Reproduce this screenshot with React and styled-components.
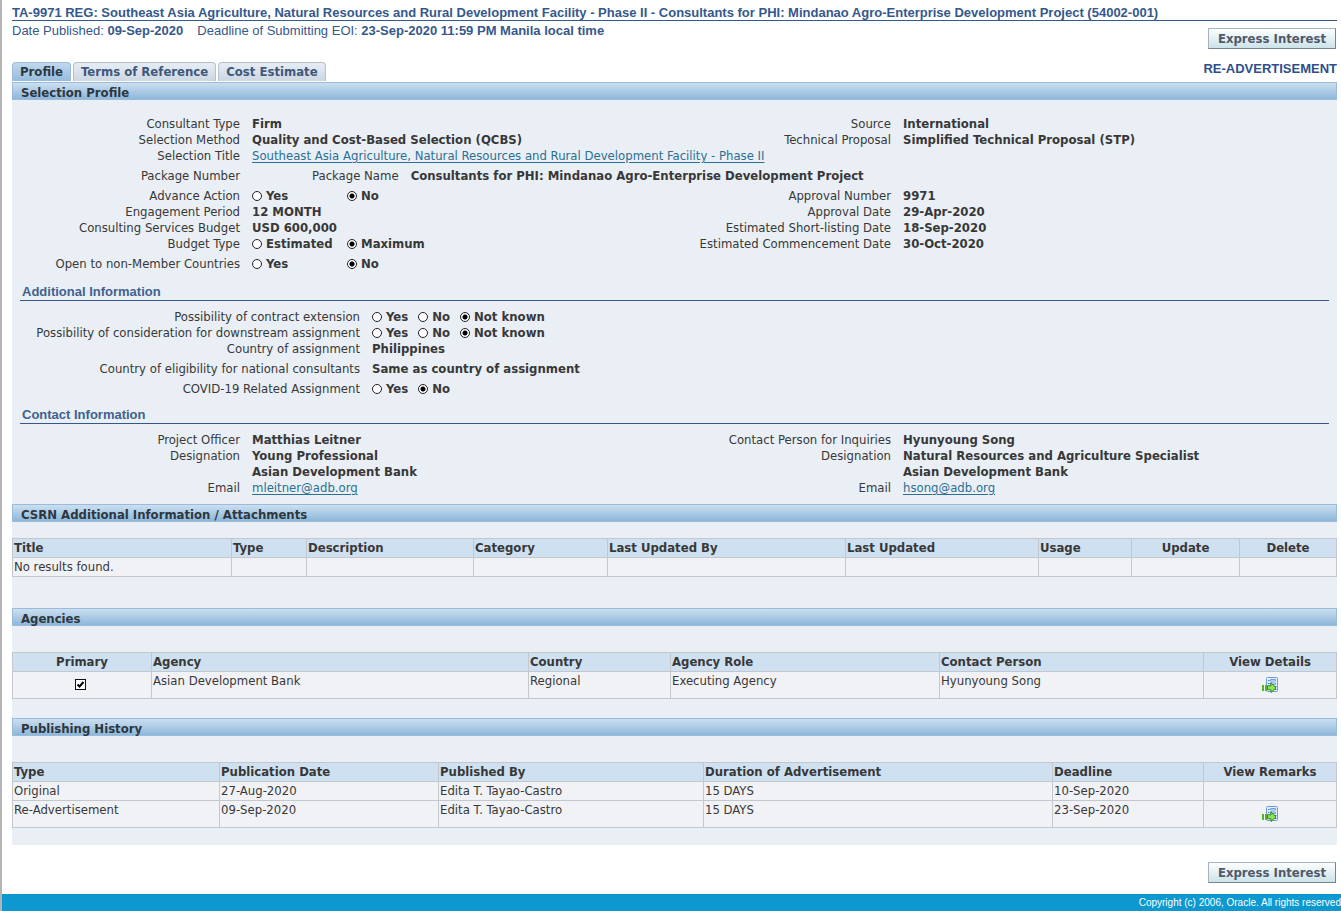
import React, { useState } from 'react'
import styled, { createGlobalStyle, css } from 'styled-components'

const GlobalStyle = createGlobalStyle`
  * {
    box-sizing: border-box;
  }

  body {
    margin: 0;
    background: #fff;
    color: #383838;
    font: 13px/16px "DejaVu Sans Condensed", Tahoma, sans-serif;
  }
`

const attachmentColumns = [
  { title: 'Title', width: 219 },
  { title: 'Type', width: 75 },
  { title: 'Description', width: 167 },
  { title: 'Category', width: 134 },
  { title: 'Last Updated By', width: 238 },
  { title: 'Last Updated', width: 193 },
  { title: 'Usage', width: 93 },
  { title: 'Update', width: 108, center: true },
  { title: 'Delete', width: 97, center: true },
]

const agencyColumns = [
  { title: 'Primary', width: 139, center: true },
  { title: 'Agency', width: 377 },
  { title: 'Country', width: 142 },
  { title: 'Agency Role', width: 269 },
  { title: 'Contact Person', width: 264 },
  { title: 'View Details', width: 133, center: true },
]

const historyColumns = [
  { title: 'Type', width: 207 },
  { title: 'Publication Date', width: 219 },
  { title: 'Published By', width: 265 },
  { title: 'Duration of Advertisement', width: 349 },
  { title: 'Deadline', width: 151 },
  { title: 'View Remarks', width: 133, center: true },
]

const DetailsIcon = () => (
  <svg width="16" height="16" viewBox="0 0 16 16" aria-hidden="true">
    <rect x="4.5" y="0.5" width="11" height="14" rx="1" fill="#e3effd" stroke="#6c9be0" />
    <path d="M6 3.5h1.5M6 6.5h1.5M13 9.5h1.5M13 12.5h1.5" stroke="#3f77cc" />
    <path d="M8.5 2.5h5v1.500h-5zM8.500 6h5v1.500h-5z" fill="#fff" stroke="#6f9fe2" />
    <path d="M0 8h2v6h-2zM3 8h2v6h-2z" fill="#57b32e" />
    <path d="M5.500 8.700h3.500v-3l5 5.300-5 4.500v-2.700h-3.500z" fill="#8fe35a" stroke="#2c8a18" />
  </svg>
)

const RadioField = ({ label, options, value, wide, gap }) => {
  const [selected, setSelected] = useState(value)
  return (
    <Field $gap={gap}>
      <Label>{label}</Label>
      <Options role="radiogroup" aria-label={label} $wide={wide}>
        {options.map((option) => (
          <Option key={option}>
            <Radio
              name={label}
              checked={selected === option}
              onChange={() => setSelected(option)}
            />
            {option}
          </Option>
        ))}
      </Options>
    </Field>
  )
}

const TextField = ({ label, children, gap }) => (
  <Field $gap={gap}>
    <Label>{label}</Label>
    <Value>{children}</Value>
  </Field>
)

const DataTable = ({ columns, rows }) => (
  <Table>
    <colgroup>
      {columns.map((col) => <col key={col.title} style={{ width: col.width }} />)}
    </colgroup>
    <thead>
      <tr>
        {columns.map((col) => (
          <HeadCell key={col.title} scope="col" $center={col.center}>{col.title}</HeadCell>
        ))}
      </tr>
    </thead>
    <tbody>
      {rows.map((row, i) => (
        <tr key={i}>
          {columns.map((col, j) => (
            <Cell key={col.title} $center={col.center}>{row[j]}</Cell>
          ))}
        </tr>
      ))}
    </tbody>
  </Table>
)

const App = () => {
  const [primary, setPrimary] = useState(true)

  return (
    <Page>
      <GlobalStyle />
      <Main>
        <Title>
          TA-9971 REG: Southeast Asia Agriculture, Natural Resources and Rural Development Facility - Phase II - Consultants for PHI: Mindanao Agro-Enterprise Development Project (54002-001)
        </Title>
        <Header>
          <HeaderSide>
            <Meta>
              <span>Date Published: <b>09-Sep-2020</b></span>
              <span>Deadline of Submitting EOI: <b>23-Sep-2020 11:59 PM Manila local time</b></span>
            </Meta>
            <Tabs>
              <Tab href="#profile" $active>Profile</Tab>
              <Tab href="#terms">Terms of Reference</Tab>
              <Tab href="#cost">Cost Estimate</Tab>
            </Tabs>
          </HeaderSide>
          <HeaderActions>
            <Button>Express Interest</Button>
            <Notice>RE-ADVERTISEMENT</Notice>
          </HeaderActions>
        </Header>

        <Panel>
          <SectionBar>Selection Profile</SectionBar>
          <ProfileColumns>
            <div>
              <TextField label="Consultant Type">Firm</TextField>
              <TextField label="Selection Method">Quality and Cost-Based Selection (QCBS)</TextField>
              <TextField label="Selection Title">
                <Link href="#facility">Southeast Asia Agriculture, Natural Resources and Rural Development Facility - Phase II</Link>
              </TextField>
              <Field $gap>
                <Label>Package Number</Label>
                <PackageName>
                  <span>Package Name</span>
                  <Value>Consultants for PHI: Mindanao Agro-Enterprise Development Project</Value>
                </PackageName>
              </Field>
              <RadioField label="Advance Action" options={['Yes', 'No']} value="No" wide gap />
              <TextField label="Engagement Period">12 MONTH</TextField>
              <TextField label="Consulting Services Budget">USD 600,000</TextField>
              <RadioField label="Budget Type" options={['Estimated', 'Maximum']} value="Maximum" wide />
              <RadioField label="Open to non-Member Countries" options={['Yes', 'No']} value="No" wide gap />
            </div>
            <SideFields>
              <div>
                <TextField label="Source">International</TextField>
                <TextField label="Technical Proposal">Simplified Technical Proposal (STP)</TextField>
              </div>
              <div>
                <TextField label="Approval Number">9971</TextField>
                <TextField label="Approval Date">29-Apr-2020</TextField>
                <TextField label="Estimated Short-listing Date">18-Sep-2020</TextField>
                <TextField label="Estimated Commencement Date">30-Oct-2020</TextField>
              </div>
            </SideFields>
          </ProfileColumns>

          <SubTitle>Additional Information</SubTitle>
          <WideFields>
            <RadioField label="Possibility of contract extension" options={['Yes', 'No', 'Not known']} value="Not known" />
            <RadioField label="Possibility of consideration for downstream assignment" options={['Yes', 'No', 'Not known']} value="Not known" />
            <TextField label="Country of assignment">Philippines</TextField>
            <TextField label="Country of eligibility for national consultants" gap>Same as country of assignment</TextField>
            <RadioField label="COVID-19 Related Assignment" options={['Yes', 'No']} value="No" gap />
          </WideFields>

          <SubTitle>Contact Information</SubTitle>
          <ContactColumns>
            <div>
              <TextField label="Project Officer">Matthias Leitner</TextField>
              <TextField label="Designation">Young Professional<br />Asian Development Bank</TextField>
              <TextField label="Email"><Link href="mailto:mleitner@adb.org">mleitner@adb.org</Link></TextField>
            </div>
            <div>
              <TextField label="Contact Person for Inquiries">Hyunyoung Song</TextField>
              <TextField label="Designation">Natural Resources and Agriculture Specialist<br />Asian Development Bank</TextField>
              <TextField label="Email"><Link href="mailto:hsong@adb.org">hsong@adb.org</Link></TextField>
            </div>
          </ContactColumns>

          <SectionBar>CSRN Additional Information / Attachments</SectionBar>
          <AttachmentsBody>
            <DataTable columns={attachmentColumns} rows={[['No results found.']]} />
          </AttachmentsBody>

          <SectionBar>Agencies</SectionBar>
          <TableBody>
            <DataTable
              columns={agencyColumns}
              rows={[[
                <Checkbox
                  aria-label="Primary"
                  checked={primary}
                  onChange={() => setPrimary(!primary)}
                />,
                'Asian Development Bank',
                'Regional',
                'Executing Agency',
                'Hyunyoung Song',
                <IconButton aria-label="View Details"><DetailsIcon /></IconButton>,
              ]]}
            />
          </TableBody>

          <SectionBar>Publishing History</SectionBar>
          <TableBody>
            <DataTable
              columns={historyColumns}
              rows={[
                ['Original', '27-Aug-2020', 'Edita T. Tayao-Castro', '15 DAYS', '10-Sep-2020'],
                [
                  'Re-Advertisement', '09-Sep-2020', 'Edita T. Tayao-Castro', '15 DAYS', '23-Sep-2020',
                  <IconButton aria-label="View Remarks"><DetailsIcon /></IconButton>,
                ],
              ]}
            />
          </TableBody>
        </Panel>

        <BottomActions>
          <Button>Express Interest</Button>
        </BottomActions>
      </Main>
      <Footer>Copyright (c) 2006, Oracle. All rights reserved</Footer>
    </Page>
  )
}

const arial = css`
  font-family: "Liberation Sans", Arial, sans-serif;
`

const Page = styled.div`
  min-height: 100vh;
  display: flex;
  flex-direction: column;
  border-left: 2px solid #b4b4b4;
`

const Main = styled.main`
  flex: 1;
  padding: 5px 4px 0 10px;
`

const Title = styled.h1`
  ${arial}
  margin: 0;
  font-size: 13px;
  line-height: 15px;
  color: #35588c;
  border-bottom: 1px solid #35588c;
`

const Header = styled.header`
  display: flex;
  justify-content: space-between;
  margin-bottom: 1px;
`

const HeaderSide = styled.div`
  display: flex;
  flex-direction: column;
  justify-content: space-between;
`

const HeaderActions = styled.div`
  display: flex;
  flex-direction: column;
  align-items: flex-end;
  gap: 12px;
  padding: 7px 0 4px;
`

const Meta = styled.div`
  ${arial}
  display: flex;
  gap: 14px;
  padding-top: 2px;
  color: #35588c;
`

const Tabs = styled.nav`
  display: flex;
  gap: 2px;
`

const Tab = styled.a`
  height: 19px;
  padding: 1px 7px 0;
  border: 1px solid #b9c0c8;
  border-bottom: 0;
  border-radius: 4px 4px 0 0;
  background: linear-gradient(#e6edf4, #cdd7e2);
  color: #3f587c;
  font-weight: bold;
  line-height: 15px;
  text-decoration: none;

  ${props => props.$active && css`
    border-color: #9dbedb;
    background: linear-gradient(#c0d8ec, #96bbdc);
    color: #2c3945;
  `}
`

const Notice = styled.strong`
  ${arial}
  color: #2f4f8c;
`

const Button = styled.button`
  height: 21px;
  margin-right: 1px;
  padding: 0 9px;
  border: 1px solid;
  border-color: #a3b3c0 #77838f #77838f #a3b3c0;
  background: linear-gradient(#fdfefe, #cbe3e9);
  color: #50596a;
  font: bold 13px/16px "DejaVu Sans Condensed", Tahoma, sans-serif;
  cursor: pointer;
`

const Panel = styled.div`
  background: #e9eff5;
`

const SectionBar = styled.h2`
  margin: 0;
  height: 18px;
  padding: 2px 8px 0;
  border: 1px solid #9abbdb;
  background: linear-gradient(#cbdff0, #8db7da);
  color: #2e3740;
  font-size: 13px;
  line-height: 16px;
`

const SubTitle = styled.h3`
  ${arial}
  margin: 0 8px;
  padding: 0 2px;
  border-bottom: 1px solid #35588c;
  color: #42618f;
  font-size: 13px;
  line-height: 16px;
`

const Field = styled.div`
  display: grid;
  grid-template-columns: 228px 1fr;
  column-gap: 12px;
  margin-top: ${props => (props.$gap ? '4px' : '0')};
  white-space: nowrap;
`

const Columns = styled.div`
  display: grid;
  grid-template-columns: minmax(0, 651fr) minmax(0, 674fr);
`

const ProfileColumns = styled(Columns)`
  padding: 16px 0 12px;
`

const ContactColumns = styled(Columns)`
  padding: 8px 0;
`

const SideFields = styled.div`
  display: flex;
  flex-direction: column;
  gap: 40px;
`

const WideFields = styled.div`
  padding: 8px 0 10px;

  ${Field} {
    grid-template-columns: 348px 1fr;
  }
`

const Label = styled.span`
  text-align: right;
`

const Value = styled.span`
  font-weight: bold;
`

const PackageName = styled.div`
  display: flex;
  gap: 12px;
  padding-left: 60px;
`

const Options = styled.div`
  display: flex;
  gap: ${props => (props.$wide ? '0' : '10px')};
  font-weight: bold;

  > label {
    min-width: ${props => (props.$wide ? '95px' : '0')};
  }
`

const Option = styled.label`
  display: flex;
  align-items: center;
  gap: 4px;
`

const Radio = styled.input.attrs({ type: 'radio' })`
  appearance: none;
  width: 10px;
  height: 10px;
  margin: 0;
  border: 1px solid #222;
  border-radius: 50%;
  background: #fff;

  &:checked {
    background: radial-gradient(circle, #000 2px, #fff 3px);
  }
`

const Checkbox = styled.input.attrs({ type: 'checkbox' })`
  appearance: none;
  width: 11px;
  height: 11px;
  margin: 6px 3px 0 0;
  border: 1px solid #111;
  background: #fff;

  &:checked {
    background: #fff url("data:image/svg+xml,%3Csvg xmlns='http://www.w3.org/2000/svg' viewBox='0 0 9 9'%3E%3Cpath d='M1.5 4.5l2 2 4-4.5' fill='none' stroke='%23000' stroke-width='2'/%3E%3C/svg%3E");
  }
`

const Link = styled.a`
  color: #2b6f93;
  font-weight: normal;
  text-underline-offset: 2px;
`

const TableBody = styled.div`
  padding: 26px 0 19px;

  &:last-child {
    padding-bottom: 17px;
  }
`

const AttachmentsBody = styled.div`
  padding: 16px 0 31px;
`

const Table = styled.table`
  width: calc(100% - 1px);
  table-layout: fixed;
  border-collapse: collapse;
`

const HeadCell = styled.th`
  height: 19px;
  padding: 1px;
  border: 1px solid #c3c8ce;
  background: #cfe0f0;
  text-align: ${props => (props.$center ? 'center' : 'left')};
`

const Cell = styled.td`
  height: 19px;
  padding: 1px;
  border: 1px solid #c3c8ce;
  background: #f1f2f5;
  vertical-align: top;
  text-align: ${props => (props.$center ? 'center' : 'left')};
`

const IconButton = styled.button`
  display: block;
  margin: 4px auto;
  padding: 0;
  border: 0;
  background: none;
  cursor: pointer;

  svg {
    display: block;
  }
`

const BottomActions = styled.div`
  display: flex;
  justify-content: flex-end;
  padding: 17px 0 11px;
`

const Footer = styled.footer`
  ${arial}
  padding: 2px 0 1px;
  background: #0d98d0;
  color: #fff;
  font-size: 10px;
  line-height: 14px;
  text-align: right;
`

export default App
